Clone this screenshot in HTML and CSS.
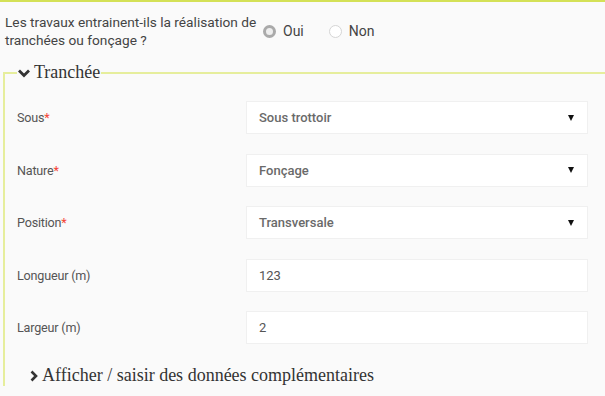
FILE: index.html
```html
<!DOCTYPE html>
<html lang="fr">
<head>
    <meta charset="UTF-8">
    <title>Tranchée</title>
    <link rel="stylesheet" href="styles.css">
</head>
<body>
    <div class="question">
        <div class="question-text">Les travaux entrainent-ils la réalisation de tranchées ou fonçage ?</div>
        <div class="choices">
            <span class="choice"><span class="radio checked"></span>Oui</span>
            <span class="choice"><span class="radio"></span>Non</span>
        </div>
    </div>

    <fieldset class="group">
        <legend>
            <svg class="chevron" width="14" height="12" viewBox="0 0 14 12"><polyline points="2,3.5 7,8.5 12,3.5" fill="none" stroke="#333" stroke-width="2.8"/></svg>Tranchée
        </legend>

        <div class="row">
            <label>Sous<span class="req">*</span></label>
            <div class="field select">Sous trottoir<span class="caret"></span></div>
        </div>
        <div class="row">
            <label>Nature<span class="req">*</span></label>
            <div class="field select">Fonçage<span class="caret"></span></div>
        </div>
        <div class="row">
            <label>Position<span class="req">*</span></label>
            <div class="field select">Transversale<span class="caret"></span></div>
        </div>
        <div class="row">
            <label>Longueur (m)</label>
            <div class="field">123</div>
        </div>
        <div class="row">
            <label>Largeur (m)</label>
            <div class="field">2</div>
        </div>

        <div class="more">
            <svg class="chevron-right" width="10" height="12" viewBox="0 0 10 12"><polyline points="2.5,1.5 7,6 2.5,10.5" fill="none" stroke="#333" stroke-width="2.6"/></svg>Afficher / saisir des données complémentaires
        </div>
    </fieldset>
</body>
</html>
```

FILE: styles.css
```css
html, body {
    overflow: hidden;
}
body {
    margin: 0;
    background-color: #fafafa;
    border-top: 2px solid #d4e157;
    font-family: Roboto, "Liberation Sans", sans-serif;
    color: #555;
    height: 394px;
}
.question {
    display: flex;
    align-items: center;
    padding: 11px 0 0 5px;
}
.question-text {
    width: 258px;
    font-size: 13.7px;
    line-height: 18px;
    color: #444;
}
.choices {
    display: flex;
    align-items: center;
    font-size: 14px;
    color: #444;
}
.choice {
    display: inline-flex;
    align-items: center;
    margin-right: 25px;
}
.radio {
    display: inline-block;
    box-sizing: border-box;
    width: 13px;
    height: 13px;
    border-radius: 50%;
    border: 1px solid #d5d5d5;
    background: #fff;
    margin-right: 7px;
}
.radio.checked {
    border: 3px solid #aaa;
    background: #eee;
}
.group {
    margin: 13px 0 0 3px;
    padding: 0 0 0 12px;
    border: 2px solid #e6ee9c;
    border-right: none;
    border-bottom: none;
}
.group legend {
    padding: 0 1px 0 0;
    margin-left: 0;
    font-family: "Liberation Serif", serif;
    font-size: 18px;
    color: #333;
    display: flex;
    align-items: center;
}
.chevron {
    margin-right: 3px;
}
.row {
    display: flex;
    align-items: center;
    height: 33px;
    margin-top: 19.5px;
}
.group legend + .row {
    margin-top: 18px;
}
.row label {
    width: 229px;
    font-size: 12.6px;
    letter-spacing: -0.2px;
    color: #555;
}
.req {
    color: #f44336;
}
.field {
    box-sizing: border-box;
    width: 342px;
    height: 33px;
    background: #fff;
    border: 1px solid #f0f0f0;
    padding: 0 12px;
    display: flex;
    align-items: center;
    font-size: 13px;
    color: #555;
}
.select {
    justify-content: space-between;
    font-weight: 500;
    color: #6a6a6a;
}
.caret {
    width: 0;
    height: 0;
    border-left: 3.5px solid transparent;
    border-right: 3.5px solid transparent;
    border-top: 6px solid #111;
    margin-right: 1px;
}
.more {
    display: flex;
    align-items: center;
    margin: 21px 0 0 12px;
    font-family: "Liberation Serif", serif;
    font-size: 18px;
    color: #333;
}
.chevron-right {
    margin-right: 3px;
}
```
